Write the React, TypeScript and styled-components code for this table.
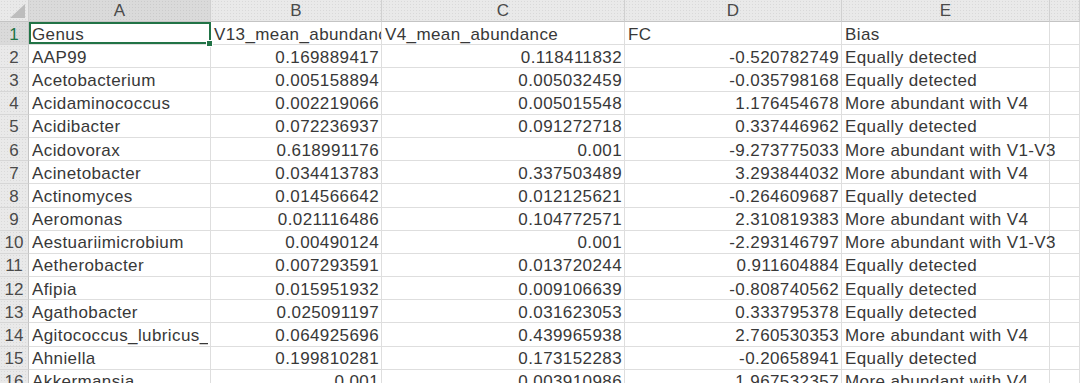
import React from 'react';
import styled, { createGlobalStyle, css } from 'styled-components';

const GlobalStyle = createGlobalStyle`
  html, body { margin: 0; padding: 0; background: #ffffff; overflow: hidden; }
  body { font-family: "Liberation Sans", Arial, sans-serif; }
`;

const GREEN = '#217346';
const HEADER_BG = '#e9e9e9';
const HEADER_SEL = '#dadada';
const GRID = '#dedede';

const Sheet = styled.div`
  display: grid;
  grid-template-columns: 29px 182px 171px 243px 217px 208px 1fr;
  grid-template-rows: 22px;
  grid-auto-rows: 23.2px;
  width: 1080px;
  height: 383px;
  overflow: hidden;
  background: #ffffff;
`;

const headerBase = css`
  box-sizing: border-box;
  background-color: ${HEADER_BG};
  background-image: radial-gradient(rgba(0, 0, 0, 0.07) 0.7px, transparent 0.8px);
  background-size: 3px 3px;
  color: #4a4a4a;
  font-size: 17px;
  display: flex;
  align-items: center;
  justify-content: center;
`;

const Corner = styled.div`
  ${headerBase};
  border-right: 1px solid #cfcfcf;
  border-bottom: 1px solid #c4c4c4;
  align-items: flex-end;
  justify-content: flex-end;
  padding: 0 3px 3px 0;
`;

const ColHeader = styled.div<{ $sel?: boolean }>`
  ${headerBase};
  padding-top: 1px;
  border-right: 1px solid #d0d0d0;
  border-bottom: 1px solid #c4c4c4;
  ${(p) => p.$sel && css`background-color: ${HEADER_SEL};`}
`;

const RowNum = styled.div<{ $sel?: boolean }>`
  ${headerBase};
  padding-top: 3px;
  border-right: 1px solid #c4c4c4;
  border-bottom: 1px solid #d6d6d6;
  ${(p) => p.$sel && css`background-color: ${HEADER_SEL}; color: ${GREEN};`}
`;

const Cell = styled.div<{ $num?: boolean; $spill?: boolean; $sel?: boolean }>`
  box-sizing: border-box;
  position: relative;
  border-right: 1px solid ${GRID};
  border-bottom: 1px solid ${GRID};
  font-size: 17px;
  letter-spacing: 0.4px;
  color: #383838;
  white-space: nowrap;
  display: flex;
  align-items: center;
  padding: 3px 2px 0 3px;
  justify-content: ${(p) => (p.$num ? 'flex-end' : 'flex-start')};
  overflow: ${(p) => (p.$spill ? 'visible' : 'hidden')};
  ${(p) => p.$spill && css`z-index: 1;`}
  ${(p) =>
    p.$sel &&
    css`
      overflow: visible;
      z-index: 2;
      &::after {
        content: '';
        position: absolute;
        top: 0;
        left: 0;
        right: -1px;
        bottom: 0;
        border: 2px solid ${GREEN};
        pointer-events: none;
      }
      &::before {
        content: '';
        position: absolute;
        right: -3px;
        bottom: -3px;
        width: 5px;
        height: 5px;
        background: ${GREEN};
        border: 1px solid #ffffff;
        z-index: 3;
      }
    `}
`;

const Clip = styled.span`
  overflow: hidden;
`;

type Row = [string, string, string, string, string];

const rows: Row[] = [
  ['Genus', 'V13_mean_abundance', 'V4_mean_abundance', 'FC', 'Bias'],
  ['AAP99', '0.169889417', '0.118411832', '-0.520782749', 'Equally detected'],
  ['Acetobacterium', '0.005158894', '0.005032459', '-0.035798168', 'Equally detected'],
  ['Acidaminococcus', '0.002219066', '0.005015548', '1.176454678', 'More abundant with V4'],
  ['Acidibacter', '0.072236937', '0.091272718', '0.337446962', 'Equally detected'],
  ['Acidovorax', '0.618991176', '0.001', '-9.273775033', 'More abundant with V1-V3'],
  ['Acinetobacter', '0.034413783', '0.337503489', '3.293844032', 'More abundant with V4'],
  ['Actinomyces', '0.014566642', '0.012125621', '-0.264609687', 'Equally detected'],
  ['Aeromonas', '0.021116486', '0.104772571', '2.310819383', 'More abundant with V4'],
  ['Aestuariimicrobium', '0.00490124', '0.001', '-2.293146797', 'More abundant with V1-V3'],
  ['Aetherobacter', '0.007293591', '0.013720244', '0.911604884', 'Equally detected'],
  ['Afipia', '0.015951932', '0.009106639', '-0.808740562', 'Equally detected'],
  ['Agathobacter', '0.025091197', '0.031623053', '0.333795378', 'Equally detected'],
  ['Agitococcus_lubricus_group', '0.064925696', '0.439965938', '2.760530353', 'More abundant with V4'],
  ['Ahniella', '0.199810281', '0.173152283', '-0.20658941', 'Equally detected'],
  ['Akkermansia', '0.001', '0.003910986', '1.967532357', 'More abundant with V4'],
];

const letters = ['A', 'B', 'C', 'D', 'E', ''];

const CornerTriangle = () => (
  <svg width="15" height="14" viewBox="0 0 15 14">
    <polygon points="15,0 15,14 0,14" fill="#bdbdbd" />
  </svg>
);

export default function App() {
  return (
    <>
      <GlobalStyle />
      <Sheet>
        <Corner>
          <CornerTriangle />
        </Corner>
        {letters.map((l, i) => (
          <ColHeader key={`h${i}`} $sel={i === 0}>
            {l}
          </ColHeader>
        ))}
        {rows.map((r, ri) => {
          const header = ri === 0;
          return (
            <React.Fragment key={`r${ri}`}>
              <RowNum $sel={ri === 0}>{ri + 1}</RowNum>
              <Cell $sel={ri === 0}>
                <Clip>{r[0]}</Clip>
              </Cell>
              <Cell $num={!header}>{r[1]}</Cell>
              <Cell $num={!header}>{r[2]}</Cell>
              <Cell $num={!header}>{r[3]}</Cell>
              <Cell $spill>{r[4]}</Cell>
              <Cell />
            </React.Fragment>
          );
        })}
      </Sheet>
    </>
  );
}
